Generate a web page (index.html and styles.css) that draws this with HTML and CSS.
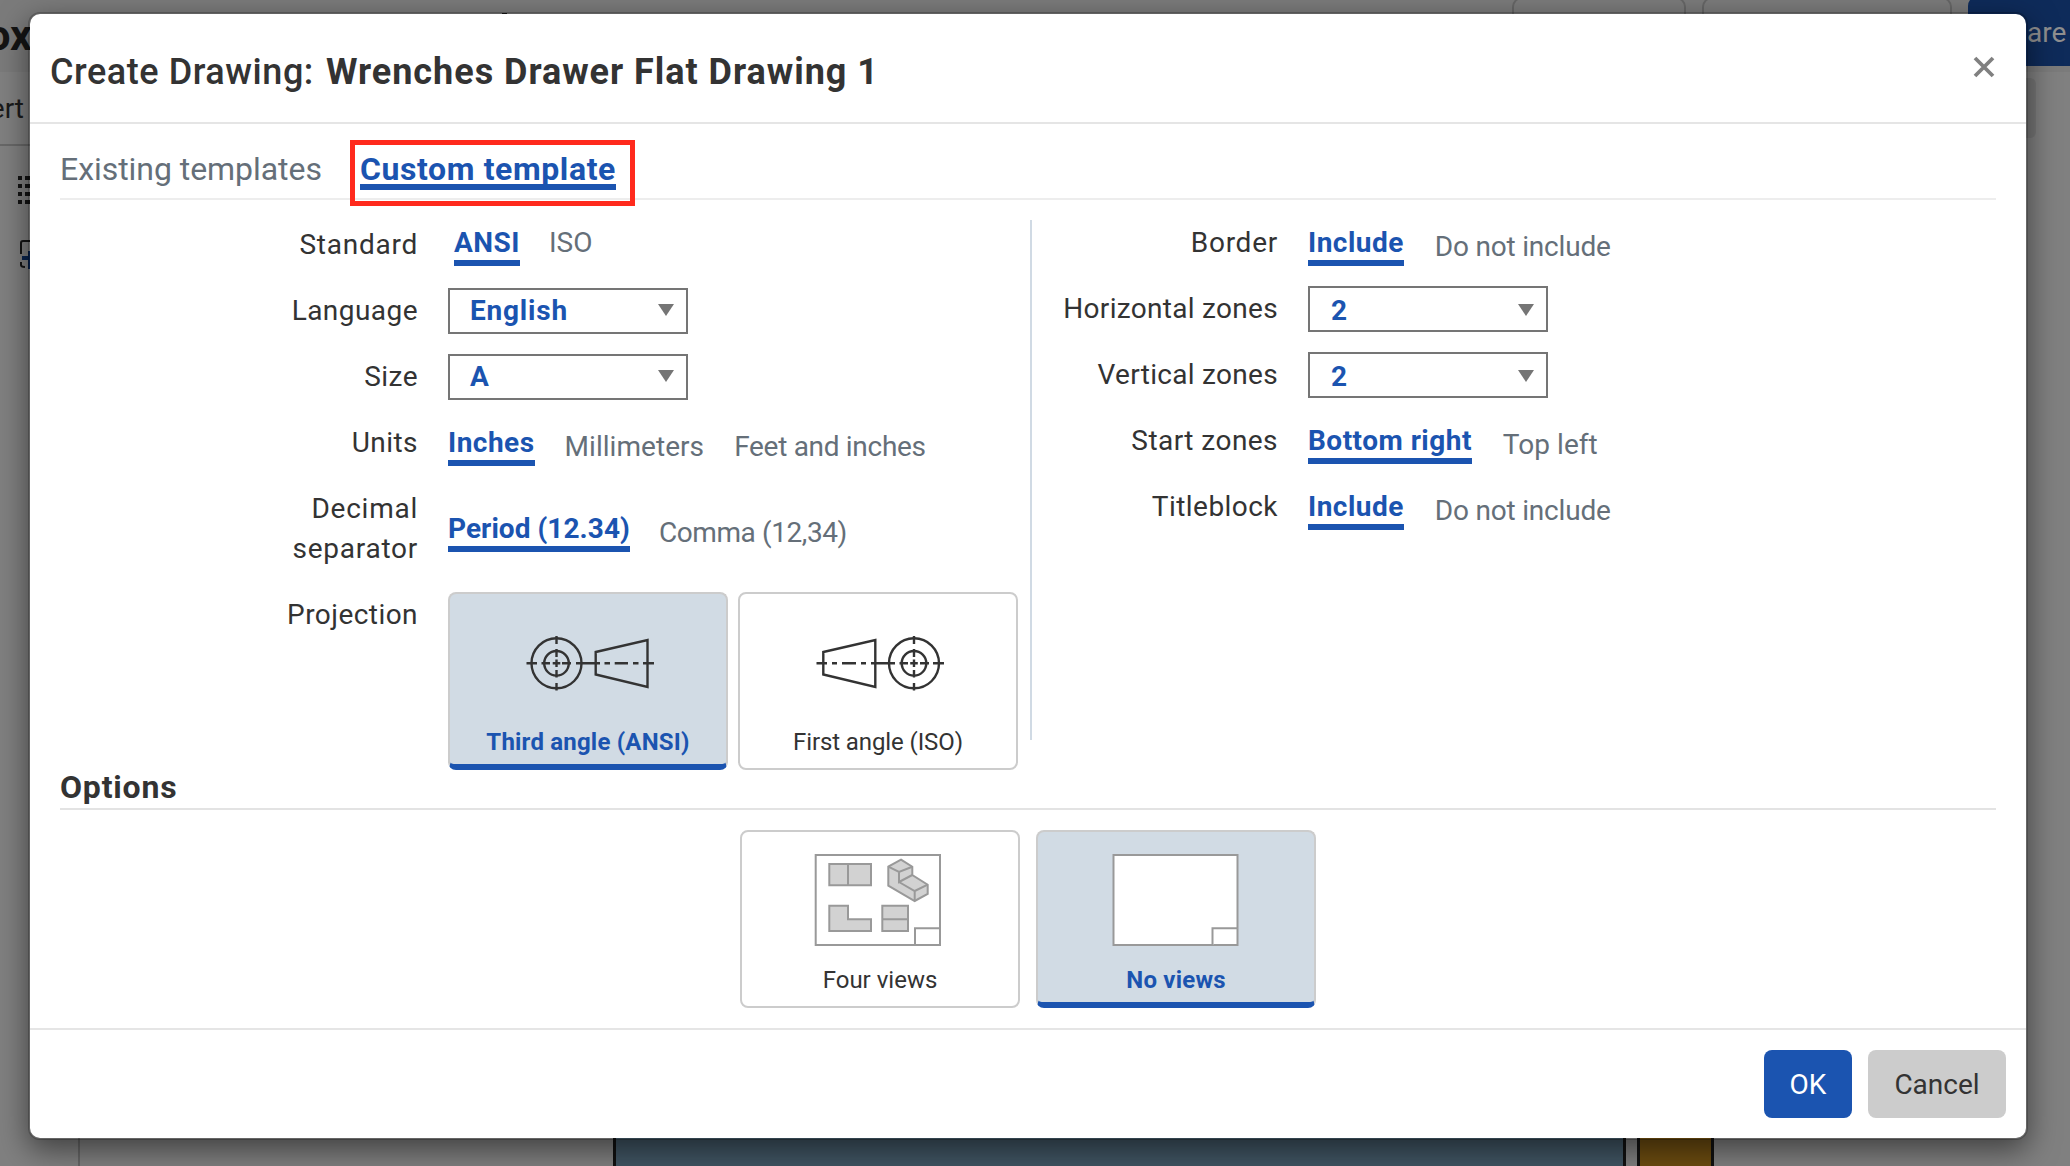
FILE: index.html
```html
<!DOCTYPE html>
<html lang="en">
<head>
<meta charset="utf-8">
<title>Create Drawing</title>
<link rel="stylesheet" href="styles.css">
</head>
<body>
<div class="backdrop" aria-hidden="true">
  <div class="bg-topbar"></div>
  <div class="bg-title">ox</div>
  <div class="bg-mark"></div>
  <div class="bg-insert">ert</div>
  <div class="bg-rule"></div>
  <svg class="bg-icons" width="40" height="110" viewBox="0 0 40 110">
    <path d="M0 4h4M7 4h30M0 12h4M7 12h30M0 20h4M7 20h30M0 28h4M7 28h30" stroke="#141414" stroke-width="4"/>
    <path d="M3 80V69q0-2 2-2h24M3 88v3q0 2 4 2" fill="none" stroke="#141414" stroke-width="2"/>
    <path d="M4 84h20M12 77v18" stroke="#0a2550" stroke-width="4"/>
  </svg>
  <div class="bg-box bg-box-a"></div>
  <div class="bg-box bg-box-b"></div>
  <div class="bg-share">are</div>
  <div class="bg-tool"></div>
  <div class="bg-panel-edge"></div>
  <div class="bg-part bg-part-blue"></div>
  <div class="bg-part bg-part-gold"></div>
</div>

<main class="dialog">
  <header class="dialog-header">
    <h1 class="dialog-title"><span class="dialog-action">Create Drawing:</span><span class="dialog-name">Wrenches Drawer Flat Drawing 1</span></h1>
    <svg class="close" width="22" height="22" viewBox="0 0 22 22"><path d="M2 2l18 18M20 2L2 20" stroke="#808080" stroke-width="3.8"/></svg>
  </header>

  <section class="dialog-body">
    <nav class="tabs">
      <span class="tab">Existing templates</span>
      <span class="tab tab-active">Custom template<i class="highlight"></i></span>
    </nav>

    <div class="columns">
      <div class="column column-left">
        <div class="row">
          <div class="label label-standard">Standard</div>
          <div class="choices choices-standard"><span class="choice chosen">ANSI</span><span class="choice level">ISO</span></div>
        </div>
        <div class="row">
          <div class="label">Language</div>
          <div class="select">English<i class="arrow"></i></div>
        </div>
        <div class="row">
          <div class="label">Size</div>
          <div class="select">A<i class="arrow"></i></div>
        </div>
        <div class="row">
          <div class="label">Units</div>
          <div class="choices choices-units"><span class="choice chosen">Inches</span><span class="choice wide">Millimeters</span><span class="choice">Feet and inches</span></div>
        </div>
        <div class="row row-tall">
          <div class="label label-decimal">Decimal<br>separator</div>
          <div class="choices choices-decimal"><span class="choice chosen">Period (12.34)</span><span class="choice">Comma (12,34)</span></div>
        </div>
        <div class="row row-cards">
          <div class="label">Projection</div>
          <div class="cards">
            <div class="card card-active">
              <svg class="projection" width="134" height="66" viewBox="0 0 134 66" fill="none" stroke="#333" stroke-width="2.4">
                <circle cx="32.5" cy="33.3" r="25"/><circle cx="32.5" cy="33.3" r="12.3"/>
                <path d="M71.7 22L123.5 10V57L71.7 44.5Z"/>
                <path d="M2.5 33.3H13M17.5 33.3H26M28.7 33.3h7.6M38 33.3h9M52 33.3h24M80.5 33.3H86M90.7 33.3H104M109 33.3h5.5M119 33.3h11M32.5 6v8M32.5 19v8M32.5 29.5v7.6M32.5 40v7.5M32.5 53v7.5"/>
              </svg>
              <span class="card-label">Third angle (ANSI)</span>
            </div>
            <div class="card">
              <svg class="projection" width="134" height="66" viewBox="0 0 134 66" fill="none" stroke="#333" stroke-width="2.4">
                <circle cx="100" cy="33.3" r="25"/><circle cx="100" cy="33.3" r="12.3"/>
                <path d="M9.3 22L61.3 10V57L9.3 44.5Z"/>
                <path d="M2.5 33.3H13M18 33.3h5M28 33.3h14M47 33.3h5M57 33.3h24M85.5 33.3H94M96.2 33.3h7.6M106 33.3h9M119 33.3h11M100 6v8M100 19v8M100 29.5v7.6M100 40v7.5M100 53v7.5"/>
              </svg>
              <span class="card-label card-label-first">First angle (ISO)</span>
            </div>
          </div>
        </div>
      </div>

      <div class="column column-right">
        <div class="row">
          <div class="label label-border">Border</div>
          <div class="choices"><span class="choice chosen">Include</span><span class="choice">Do not include</span></div>
        </div>
        <div class="row">
          <div class="label label-zones">Horizontal zones</div>
          <div class="select">2<i class="arrow"></i></div>
        </div>
        <div class="row">
          <div class="label label-zones">Vertical zones</div>
          <div class="select">2<i class="arrow"></i></div>
        </div>
        <div class="row">
          <div class="label">Start zones</div>
          <div class="choices"><span class="choice chosen">Bottom right</span><span class="choice wide">Top left</span></div>
        </div>
        <div class="row">
          <div class="label">Titleblock</div>
          <div class="choices"><span class="choice chosen">Include</span><span class="choice">Do not include</span></div>
        </div>
      </div>
    </div>

    <h2 class="options-title">Options</h2>
    <div class="view-cards">
      <div class="card">
        <svg class="sheet" width="128" height="94" viewBox="0 0 128 94" fill="#d2d2d2" stroke="#999" stroke-width="2">
          <path d="M1.7 2H126V92H1.7Z" fill="#fff"/>
          <path d="M101 92V75.3H126" fill="none"/>
          <path d="M15.3 11H57V32.3H15.3ZM34 11V32.3"/>
          <path d="M15.3 52.7H34V66.3H57V78H15.3Z"/>
          <path d="M68.3 52.7H94V78H68.3ZM68.3 66.3H94"/>
          <path d="M87 6.7L98.3 13.7V22L113.7 31.7V41L100.7 48L74.3 32.7V13.7Z"/>
          <path d="M74.3 13.7L85 19L98.3 13.7M85 19V29L98.3 22M85 29L100.7 38L113.7 31.7M100.7 38V48" fill="none"/>
        </svg>
        <span class="card-label">Four views</span>
      </div>
      <div class="card card-active">
        <svg class="sheet" width="128" height="94" viewBox="0 0 128 94" fill="#fff" stroke="#999" stroke-width="2">
          <path d="M2.5 2H126.5V92H2.5Z"/>
          <path d="M101.5 92V75.3H126.5"/>
        </svg>
        <span class="card-label">No views</span>
      </div>
    </div>
  </section>

  <footer class="dialog-footer">
    <button class="button button-ok">OK</button>
    <button class="button button-cancel">Cancel</button>
  </footer>
</main>
</body>
</html>
```
FILE: styles.css
```css
* { box-sizing: border-box; }

body {
  margin: 0;
  width: 2070px;
  height: 1166px;
  overflow: hidden;
  position: relative;
  padding: 12px 0 0 28px;
  background: #808080;
  color: #333;
  font: 400 28px/40px Roboto, "Liberation Sans", sans-serif;
}

/* Dimmed application behind the dialog */
.backdrop { position: absolute; inset: 0; overflow: hidden; color: #141414; }
.backdrop > * { position: absolute; }
.bg-topbar { left: 0; top: 0; width: 100%; height: 72px; background: #7b7b7b; }
.bg-title { right: 2038px; top: 9px; font-size: 43px; line-height: 52px; font-weight: 700; }
.bg-mark { left: 502px; top: 13px; width: 5px; height: 2px; background: #141414; }
.bg-insert { right: 2046px; top: 89px; color: #1a1a1a; }
.bg-rule { left: 0; top: 144px; width: 40px; height: 2px; background: #686868; }
.bg-icons { left: 18px; top: 174px; }
.bg-box { top: -3px; height: 70px; border: 2px solid #666; border-radius: 10px; }
.bg-box-a { left: 1512px; width: 174px; }
.bg-box-b { left: 1702px; width: 250px; }
.bg-share { left: 1968px; top: -4px; width: 120px; height: 70px; padding: 17px 0 0 59px; border-radius: 10px; background: #0e2b5a; color: #8f8f8f; }
.bg-tool { left: 1980px; top: 78px; width: 56px; height: 60px; border-radius: 6px; background: #767676; }
.bg-panel-edge { left: 78px; top: 1100px; width: 2px; height: 70px; background: #666; }
.bg-part { top: 1000px; height: 200px; border: solid #111; border-width: 0 3px; }
.bg-part-blue { left: 613px; width: 1013px; background: #405563; }
.bg-part-gold { left: 1637px; width: 77px; background: #6c4c10; }

.dialog {
  position: relative;
  width: 2000px;
  height: 1128px;
  display: flex;
  flex-direction: column;
  border: 2px solid rgba(0, 0, 0, .2);
  border-radius: 12px;
  background: #fff;
  background-clip: padding-box;
  box-shadow: 0 10px 30px rgba(0, 0, 0, .5);
}

.dialog-header {
  height: 110px;
  display: flex;
  justify-content: space-between;
  padding: 34px 31px 0 20px;
  border-bottom: 2px solid #e5e5e5;
}
.dialog-title { margin: 0; display: flex; gap: 12px; font-size: 36px; line-height: 48px; }
.dialog-action { font-weight: 500; letter-spacing: .55px; }
.dialog-name { font-weight: 700; letter-spacing: .97px; }
.close { margin-top: 8px; }

.dialog-body { flex: 1; padding: 0 30px; }
.tabs {
  height: 76px;
  display: flex;
  gap: 38px;
  padding-top: 25px;
  border-bottom: 2px solid #ededed;
  font-size: 32px;
  line-height: 40px;
  color: #656f79;
}
.tab-active { position: relative; height: 41px; border-bottom: 6px solid #1b54b0; color: #1b54b0; font-weight: 700; letter-spacing: .6px; }
.tab:first-child { width: 262px; white-space: nowrap; letter-spacing: -.05px; }
.highlight { position: absolute; left: -10px; top: -9px; width: 285px; height: 66px; border: 5px solid #ff2a1d; }

.columns { display: flex; padding-top: 20px; height: 574px; }
.column { display: flex; flex-direction: column; }
.column-left { width: 972px; height: 520px; padding-top: 4px; border-right: 2px solid #d0dae4; }
.column-right { padding-top: 2px; }
.row { display: flex; height: 66px; flex: none; gap: 30px; }
.row-tall { height: 106px; }
.label { width: 358px; padding-top: 1px; text-align: right; letter-spacing: .45px; }
.column-right .label { width: 246px; }
.label-standard, .label-decimal, .label-border { letter-spacing: .75px; }
.column-right .label-zones { letter-spacing: .3px; }
.choices { display: flex; gap: 31px; color: #656f79; }
.choice { padding-top: 5px; white-space: nowrap; letter-spacing: -.2px; }
.wide { letter-spacing: .05px; }
.chosen { height: 44px; padding: 1px 0 0; border-bottom: 6px solid #1b54b0; color: #1b54b0; font-weight: 700; letter-spacing: .48px; }
.choices-units { gap: 30px; }
.choices-units .choice:last-child { letter-spacing: -.3px; }
.choices-standard { margin: -2px 0 0 6px; gap: 29px; }
.choices-standard .level { padding-top: 1px; letter-spacing: 0; }
.choices-decimal { margin-top: 20px; gap: 29px; }
.choices-decimal .choice { letter-spacing: -.4px; }
.choices-decimal .chosen { letter-spacing: .05px; }

.select { position: relative; width: 240px; height: 46px; margin-top: -2px; padding: 1px 0 0 20px; border: 2px solid #757575; color: #1b54b0; font-weight: 700; letter-spacing: .8px; }
.column-right .select { padding: 3px 0 0 21px; }
.arrow { position: absolute; right: 12px; top: 14px; width: 16px; height: 12px; background: #757575; clip-path: polygon(0 0, 100% 0, 50% 100%); }
.column-right .arrow { top: 16px; }

.cards { display: flex; gap: 10px; margin-top: -2px; }
.card { width: 280px; height: 178px; flex: none; display: flex; flex-direction: column; align-items: center; border: 2px solid #ccc; border-radius: 8px; background: #fff; }
.card-active { border-bottom: 6px solid #1b54b0; background: #d1dbe4; color: #1b54b0; font-weight: 700; }
.card-label { font-size: 24px; line-height: 32px; white-space: nowrap; }
.card-active .card-label { letter-spacing: .2px; }
.card-label-first { letter-spacing: -.1px; }
.projection { flex: none; margin: 36px 0 30px 6px; }
.sheet { flex: none; margin: 21px 4px 17px 0; }
.card-active .sheet { margin-right: 3px; }

.options-title { margin: -7px 0 0; height: 43px; border-bottom: 2px solid #e3e3e3; font-size: 32px; line-height: 40px; font-weight: 700; letter-spacing: .8px; }
.view-cards { display: flex; justify-content: center; gap: 16px; padding-top: 20px; }

.dialog-footer { height: 110px; display: flex; justify-content: flex-end; gap: 16px; padding: 20px 20px 0; border-top: 2px solid #e5e5e5; }
.button { height: 68px; padding: 2px 0 0; border: 0; border-radius: 8px; font: inherit; }
.button-ok { width: 88px; background: #1b54b0; color: #fff; }
.button-cancel { width: 138px; background: #ccc; color: #333; }
```
